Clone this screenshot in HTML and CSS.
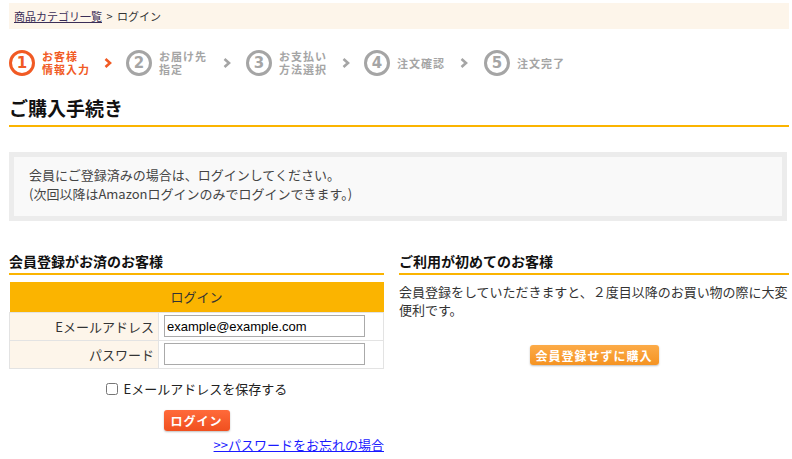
FILE: index.html
```html
<!DOCTYPE html>
<html lang="ja">
<head>
<meta charset="utf-8">
<title>ログイン</title>
<link rel="stylesheet" href="styles.css">
</head>
<body>
<div class="page">
  <div class="breadcrumb"><a href="#">商品カテゴリ一覧</a> &gt; ログイン</div>

  <ol class="steps">
    <li class="step active">
      <span class="num">1</span><span class="label">お客様<br>情報入力</span>
    </li>
    <li class="arrow a1 active"><svg width="8" height="12" viewBox="0 0 8 12"><polyline points="1.5,2 6,6 1.5,10" fill="none" stroke="currentColor" stroke-width="2.6"/></svg></li>
    <li class="step">
      <span class="num">2</span><span class="label">お届け先<br>指定</span>
    </li>
    <li class="arrow a2"><svg width="8" height="12" viewBox="0 0 8 12"><polyline points="1.5,2 6,6 1.5,10" fill="none" stroke="currentColor" stroke-width="2.6"/></svg></li>
    <li class="step">
      <span class="num">3</span><span class="label">お支払い<br>方法選択</span>
    </li>
    <li class="arrow a3"><svg width="8" height="12" viewBox="0 0 8 12"><polyline points="1.5,2 6,6 1.5,10" fill="none" stroke="currentColor" stroke-width="2.6"/></svg></li>
    <li class="step">
      <span class="num">4</span><span class="label">注文確認</span>
    </li>
    <li class="arrow a4"><svg width="8" height="12" viewBox="0 0 8 12"><polyline points="1.5,2 6,6 1.5,10" fill="none" stroke="currentColor" stroke-width="2.6"/></svg></li>
    <li class="step">
      <span class="num">5</span><span class="label">注文完了</span>
    </li>
  </ol>

  <h1 class="title">ご購入手続き</h1>

  <div class="notice">
    <div class="notice-inner">
      <p>会員にご登録済みの場合は、ログインしてください。</p>
      <p>(次回以降はAmazonログインのみでログインできます。)</p>
    </div>
  </div>

  <div class="columns">
    <section class="col col-left">
      <h2 class="sub">会員登録がお済のお客様</h2>
      <table class="login-table">
        <tr><th colspan="2" class="head">ログイン</th></tr>
        <tr>
          <td class="lbl">Eメールアドレス</td>
          <td class="fld"><input type="text" value="example@example.com"></td>
        </tr>
        <tr>
          <td class="lbl">パスワード</td>
          <td class="fld"><input type="password" value=""></td>
        </tr>
      </table>
      <div class="remember"><label><input type="checkbox"> Eメールアドレスを保存する</label></div>
      <div class="btn-row"><button class="btn btn-login">ログイン</button></div>
      <div class="forgot"><a href="#">&gt;&gt;パスワードをお忘れの場合</a></div>
    </section>
    <section class="col col-right">
      <h2 class="sub">ご利用が初めてのお客様</h2>
      <p class="desc">会員登録をしていただきますと、２度目以降のお買い物の際に大変便利です。</p>
      <div class="btn-row guest"><button class="btn btn-guest">会員登録せずに購入</button></div>
    </section>
  </div>
</div>
</body>
</html>
```

FILE: styles.css
```css
* { box-sizing: border-box; }
html, body { margin: 0; padding: 0; background: #fff; }
body {
  font-family: "Open Sans", "Noto Sans CJK JP", sans-serif;
  font-size: 13px;
  color: #333;
}
.page {
  width: 780px;
  margin-left: 9px;
  padding-top: 3px;
}
.breadcrumb {
  background: #fdf5ea;
  height: 26px;
  line-height: 26px;
  padding-left: 5px;
  font-size: 11px;
  color: #333;
  font-family: "Noto Sans CJK JP", sans-serif;
  word-spacing: 2px;
}
.breadcrumb a { color: #3b2e57; text-decoration: underline; word-spacing: 0; }

.steps {
  list-style: none;
  margin: 0;
  padding: 19px 0 0 0;
  display: flex;
  align-items: center;
  height: 49px;
  font-family: "Noto Sans CJK JP", sans-serif;
}
.step { display: flex; align-items: center; color: #a5a5a5; }
.step .num {
  width: 26px; height: 26px;
  border: 3px solid #a5a5a5;
  border-radius: 50%;
  display: flex; align-items: center; justify-content: center;
  font-family: "DejaVu Sans", sans-serif;
  font-weight: bold;
  font-size: 15px;
  color: #a5a5a5;
}
.step .label {
  margin-left: 7px;
  font-size: 11px;
  font-weight: bold;
  line-height: 13px;
  letter-spacing: 1px;
}
.step.active, .step.active .num { color: #f15a24; border-color: #f15a24; }
.arrow { color: #a5a5a5; display: flex; align-items: center; }
.arrow.active { color: #f15a24; }
.a1 { margin: 0 14px 0 14px; }
.a2 { margin: 0 15px 0 16px; }
.a3 { margin: 0 14px 0 15px; }
.a4 { margin: 0 16px 0 15px; }

.title {
  margin: 18px 0 0 0;
  font-size: 19px;
  font-weight: bold;
  color: #111;
  font-family: "Noto Sans CJK JP", sans-serif;
  line-height: 24px;
  padding-bottom: 5px;
  border-bottom: 2px solid #fbb400;
}

.notice {
  margin-top: 25px;
  background: #ececec;
  padding: 5px;
  width: 778px;
}
.notice-inner {
  background: #f9f9f9;
  padding: 8px 15px 13px 15px;
  font-family: "Noto Sans CJK JP", sans-serif;
  font-size: 13px;
  line-height: 19px;
  color: #444;
}
.notice-inner p { margin: 0; }

.columns {
  margin-top: 31px;
  display: flex;
  justify-content: space-between;
}
.col-left { width: 375px; }
.col-right { width: 390px; }
.sub {
  margin: 0;
  font-size: 14px;
  font-weight: bold;
  color: #111;
  font-family: "Noto Sans CJK JP", sans-serif;
  line-height: 18px;
  padding-bottom: 3px;
  border-bottom: 2px solid #fbb400;
}
.login-table {
  margin-top: 7px;
  width: 100%;
  border-collapse: collapse;
  font-family: "Noto Sans CJK JP", sans-serif;
  font-size: 13px;
}
.login-table th.head {
  background: #fbb400;
  height: 30px;
  font-weight: normal;
  color: #333;
  text-align: center;
}
.login-table td {
  border: 1px solid #e3e3e3;
  height: 28px;
  padding: 0;
}
.login-table td.lbl {
  background: #fdf5ea;
  width: 149px;
  text-align: right;
  padding-right: 4px;
  color: #333;
}
.login-table td.fld { padding-left: 5px; }
.login-table input {
  width: 201px;
  height: 22px;
  border: 1px solid #aaa;
  font-family: "Liberation Sans", Arial, sans-serif;
  font-size: 13px;
  padding: 0 2px;
  color: #000;
}
.remember {
  margin-top: 10px;
  text-align: center;
  font-family: "Noto Sans CJK JP", sans-serif;
  font-size: 13px;
  color: #222;
}
.remember input { margin: 0 3px 0 0; vertical-align: -1px; width: 12px; height: 12px; }
.btn-row { text-align: center; }
.col-left .btn-row { margin-top: 12px; }
.btn {
  border: none;
  color: #fff;
  font-weight: bold;
  font-family: "Noto Sans CJK JP", sans-serif;
  font-size: 12px;
  border-radius: 3px;
  cursor: pointer;
  box-shadow: 0 1px 2px rgba(0,0,0,0.25);
  letter-spacing: 1px;
}
.btn-login {
  background: linear-gradient(#ff6a3a, #f0501f);
  width: 66px;
  height: 21px;
  padding: 0;
}
.btn-guest {
  background: linear-gradient(#fcab48, #f59322);
  width: 129px;
  height: 20px;
  padding: 0;
}
.forgot {
  text-align: right;
  margin-top: 4px;
  font-family: "Noto Sans CJK JP", sans-serif;
  font-size: 13px;
}
.forgot a { color: #1a1aff; text-decoration: underline; }
.desc {
  margin: 8px 0 0 0;
  font-family: "Noto Sans CJK JP", sans-serif;
  font-size: 13px;
  line-height: 18px;
  color: #333;
  letter-spacing: -0.02px;
}
.guest { margin-top: 26px; }
```
